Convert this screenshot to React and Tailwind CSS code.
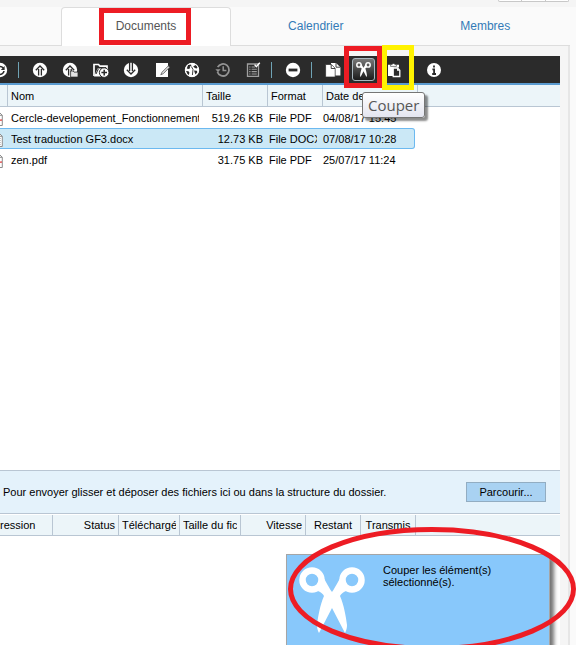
import React from "react";

function Icon({ children, className = "h-4 w-4" }) {
  return (
    <svg viewBox="0 0 16 16" className={className} fill="none" aria-hidden="true">
      {children}
    </svg>
  );
}

const dark = "#2b2b2b";

const RefreshIcon = () => (
  <Icon>
    <circle cx="8" cy="8" r="7.2" fill="#fff" />
    <path d="M11.2 6A4 4 0 1 0 12 9" stroke={dark} strokeWidth="1.6" />
    <path d="M12.6 4v4H8.8z" fill={dark} />
  </Icon>
);

const UpIcon = () => (
  <Icon>
    <circle cx="8" cy="8" r="7.2" fill="#fff" />
    <path d="M3.8 8.2 8 4l4.2 4.2M6.6 7v6.4M9.4 7v6.4" stroke={dark} strokeWidth="1.3" />
  </Icon>
);

const UpFolderIcon = () => (
  <Icon>
    <circle cx="8" cy="8" r="7.2" fill="#fff" />
    <path d="M3.8 8.2 8 4l4.2 4.2M6.6 7v6.4M9.2 7v2.5" stroke={dark} strokeWidth="1.3" />
    <path d="M8.6 9h2.6l.8 1.1H16v5H8.6z" fill="#e4e4e4" stroke={dark} strokeWidth=".8" />
  </Icon>
);

const NewFolderIcon = () => (
  <Icon>
    <path d="M1 14V2.5h4.5L7 4.2h7V7" stroke="#fff" strokeWidth="1.7" />
    <path d="M1 14.4 4.6 6.6H15L13 14.4z" fill="#fff" />
    <path d="m3 12 2.3-5" stroke={dark} strokeWidth="1" />
    <circle cx="11.2" cy="10.6" r="4.8" fill="#fff" stroke={dark} />
    <path d="M11.2 7.8v5.6M8.4 10.6H14" stroke={dark} strokeWidth="1.5" />
  </Icon>
);

const DownIcon = () => (
  <Icon>
    <circle cx="8" cy="8" r="7.2" fill="#fff" />
    <path d="M3.8 7.8 8 12l4.2-4.2M6.6 1v8M9.4 1v8" stroke={dark} strokeWidth="1.3" />
  </Icon>
);

const EditIcon = () => (
  <Icon>
    <path d="M2 1h12v14H2z" fill="#fff" />
    <path d="M14.4 3.8 8 10.2l-1.200 2.600 2.600-1.200L15.400 5.400z" fill="#ddd" stroke="#6a6a6a" strokeWidth=".9" />
  </Icon>
);

const GlobeIcon = () => (
  <Icon>
    <circle cx="8" cy="8" r="7.1" fill="#fff" />
    <path
      d="M4 3 7 2.4l.4 1.400-1.700 1 .5 1.500L4.400 7 2.800 6.600M2 9l2.500.200 1 1.500-1 2.500-1.300-1.700zM9.200 4.300l2.800-1.200 1.600 2.300-1 1.200-1.800-.700zM10 8.400l2.800.300.600 1.500-1.900 2.300-.800-2z"
      fill={dark}
    />
    <path d="M7.400 4.500 9 7.500l-.600 5.500" stroke={dark} strokeWidth=".9" />
    <circle cx="8" cy="8" r="6.7" stroke="#fff" strokeWidth="1" />
  </Icon>
);

const HistoryIcon = () => (
  <Icon>
    <path d="M2.7 5.2A6 6 0 1 1 2.4 10" stroke="#949494" strokeWidth="1.8" />
    <path d="M.4 7.2h5.2L3 10.2z" fill="#949494" />
    <path d="M8.2 4.2v4.2h3.2" stroke="#949494" strokeWidth="1.5" />
  </Icon>
);

const ChecklistIcon = () => (
  <Icon>
    <path d="M2.5 2h11v12.3h-11z" stroke="#a0a0a0" strokeWidth="1.3" />
    <path d="M4.2 5h1.3M4.2 7.3h1.3M4.2 9.6h1.3M4.2 12h1.3M6.6 5H10M6.6 7.3h5.2M6.6 9.6h5.2M6.6 12h5.2" stroke="#a0a0a0" strokeWidth="1.1" />
    <path d="m9.6 2.6 1.7 2L14.8.8" stroke="#fff" strokeWidth="1.4" />
  </Icon>
);

const MinusIcon = () => (
  <Icon>
    <circle cx="8" cy="8" r="7.2" fill="#fff" />
    <path d="M3.6 8h8.8" stroke={dark} strokeWidth="2.8" />
  </Icon>
);

const CopyIcon = () => (
  <Icon>
    <path d="M6 1h5l4.400 4.200V13.500H6z" fill="#fff" />
    <path d="M.6 2.500h5.800l3.800 3.800V15H.6z" fill="#fff" stroke={dark} strokeWidth=".7" />
    <path d="M6.2 2.700v3.800h3.800M11 1.2v4h4.2" stroke={dark} strokeWidth=".9" />
  </Icon>
);

const PasteIcon = () => (
  <Icon>
    <path d="M2 2.800h11V5.500H7.500V14H2z" fill="#fff" />
    <path d="M4.600 4.400V2.400h1.600a1.400 1.400 0 0 1 2.600 0h1.600v2z" fill="#fff" stroke={dark} strokeWidth=".6" />
    <path d="M7.200 6h4.300l2.300 2.300v6.200H7.200z" fill={dark} stroke="#fff" strokeWidth="1.300" />
    <path d="M11 6v2.800h2.800z" fill="#fff" />
  </Icon>
);

const InfoIcon = () => (
  <Icon>
    <circle cx="8" cy="8" r="7" fill="#fff" />
    <path d="M8 3.4v2.2M6.4 7.3h1.7v4.3M6.2 12h3.8" stroke={dark} strokeWidth="1.8" />
  </Icon>
);

function Scissors({ className }) {
  return (
    <svg viewBox="0 0 66 66" className={className} fill="none" aria-hidden="true">
      <circle cx="13" cy="13" r="9.5" stroke="#fff" strokeWidth="6.5" />
      <circle cx="53" cy="13" r="9.5" stroke="#fff" strokeWidth="6.5" />
      <path
        d="M22 9c4 2 6 9 11 16C38 18 40 11 44 9l3 15c-3 1-5 3-6 5 4 9 6 21 7 29 0 3-.5 5-2 8L33 41 20 66c-1.500-3-2-5-2-8 1-8 3-20 7-29-1-2-3-4-6-5z"
        fill="#fff"
      />
    </svg>
  );
}

function Tool({ label, children }) {
  return (
    <button type="button" aria-label={label} className="flex h-6 w-[30px] shrink-0 items-center justify-center">
      {children}
    </button>
  );
}

const Separator = () => <span className="h-4 w-px shrink-0 bg-[#6fa3b5]" />;

function FileIcon({ pdf }) {
  return (
    <svg viewBox="0 0 16 16" className="h-4 w-4 shrink-0" fill="none" aria-hidden="true">
      <path d="M2.500 1h8.500l4.300 4.300V15.500H2.500z" fill="#fff" stroke="#8c8c8c" />
      <path d="M11 1v4.300h4.300" stroke="#8c8c8c" />
      {pdf ? (
        <path d="M4 13c4-2 5-6 5-8 1 4 3 6 6 5-4 0-8 1-11 3" stroke="#e05555" />
      ) : (
        <path d="M4.500 7.500h9M4.500 9.500h9M4.500 11.500h9M4.500 13.500h9" stroke="#8c8c8c" />
      )}
    </svg>
  );
}

const files = [
  { name: "Cercle-developement_Fonctionnement", size: "519.26 KB", format: "File PDF", date: "04/08/17 15:45", pdf: true },
  { name: "Test traduction GF3.docx", size: "12.73 KB", format: "File DOCX", date: "07/08/17 10:28", selected: true },
  { name: "zen.pdf", size: "31.75 KB", format: "File PDF", date: "25/07/17 11:24", pdf: true },
];

function FileTable() {
  const head = "h-[22px] border-b border-r border-[#b9c6d3] bg-[#ecf5f9] p-0 pl-[3px] text-left font-normal";
  return (
    <table className="w-full table-fixed border-separate border-spacing-0 whitespace-nowrap">
      <colgroup>
        <col className="w-2" />
        <col className="w-[195px]" />
        <col className="w-[65px]" />
        <col className="w-[55px]" />
        <col className="w-[95px]" />
        <col />
      </colgroup>
      <thead>
        <tr>
          <th className={head} aria-label="Type" />
          <th className={head}>Nom</th>
          <th className={head}>Taille</th>
          <th className={head}>Format</th>
          <th className={head}><div className="mr-[3px] overflow-hidden">Date de modification</div></th>
          <th className="border-b border-[#b9c6d3] bg-[#ecf5f9] p-0" aria-label="Reste" />
        </tr>
      </thead>
      <tbody>
        {files.map((f) => {
          const cell = f.selected
            ? "h-[21px] border-y border-[#6cb9f0] bg-[#cbe8f6] p-0"
            : "h-[21px] p-0";
          return (
            <tr key={f.name} aria-selected={Boolean(f.selected)}>
              <td className={cell}>
                <div className="flex w-[3px] justify-end overflow-hidden"><FileIcon pdf={f.pdf} /></div>
              </td>
              <td className={cell}><div className="ml-[3px] mr-1 overflow-hidden">{f.name}</div></td>
              <td className={`${cell} text-right`}><div className="pr-[5px]">{f.size}</div></td>
              <td className={cell}><div className="ml-px mr-[6px] overflow-hidden">{f.format}</div></td>
              <td className="p-0">
                <div
                  className={
                    f.selected
                      ? "mr-[3px] flex h-[21px] items-center rounded-r-[3px] border-y border-r border-[#6cb9f0] bg-[#cbe8f6]"
                      : "flex h-[21px] items-center"
                  }
                >
                  {f.date}
                </div>
              </td>
              <td className="p-0" />
            </tr>
          );
        })}
      </tbody>
    </table>
  );
}

function UploadTable() {
  const th = "h-[21px] border-b border-r border-[#b9c6d3] bg-[#ecf5f9] py-0 px-[3px] font-normal";
  return (
    <table className="w-full table-fixed border-separate border-spacing-0 whitespace-nowrap">
      <colgroup>
        <col className="w-[53px]" />
        <col className="w-[66px]" />
        <col className="w-[61px]" />
        <col className="w-[61px]" />
        <col className="w-[65px]" />
        <col className="w-[55px]" />
        <col className="w-[55px]" />
        <col />
      </colgroup>
      <thead>
        <tr>
          <th className="h-[21px] border-b border-r border-[#b9c6d3] bg-[#ecf5f9] p-0 text-left font-normal">ression</th>
          <th className={`${th} text-right`}>Status</th>
          <th className={`${th} text-left`}><div className="overflow-hidden">Téléchargé</div></th>
          <th className={`${th} text-left`}><div className="overflow-hidden">Taille du fichier</div></th>
          <th className={`${th} text-right`}>Vitesse</th>
          <th className={`${th} text-center`}>Restant</th>
          <th className={`${th} text-center`}>Transmis</th>
          <th className="border-b border-[#b9c6d3] bg-[#ecf5f9] p-0" aria-label="Reste" />
        </tr>
      </thead>
    </table>
  );
}

export default function App() {
  return (
    <div className="relative flex h-screen flex-col overflow-hidden bg-[#fafafa] font-['Liberation_Sans',Arial,sans-serif] text-[11px] leading-3 text-black">
      <div className="flex h-[7px] shrink-0 items-start justify-end bg-[#f5f5f5] pr-[7px]">
        <div className="flex h-0.5 w-[71px] divide-x divide-[#c8c8c8] rounded-b border-x border-b border-[#c8c8c8] bg-white">
          <span className="flex-1" />
          <span className="flex-1" />
          <span className="flex-1" />
        </div>
      </div>

      <nav className="mr-[6px] flex h-[39px] shrink-0 border-b border-[#dddddd] text-xs">
        <div className="w-[61px] shrink-0" />
        <a href="#documents" className="relative -mb-px flex w-[170px] shrink-0 items-center justify-center rounded-t border border-b-0 border-[#dddddd] bg-white pb-[2px] text-[#555555]">
          Documents
          <span className="absolute bottom-px left-[37px] top-0 w-[92px] border-[5px] border-[#ed1c24]" />
        </a>
        <a href="#calendrier" className="flex flex-1 items-center justify-center text-[#337ab7]">Calendrier</a>
        <a href="#membres" className="flex flex-1 items-center justify-center text-[#337ab7]">Membres</a>
      </nav>

      <main className="mr-[6px] flex min-h-0 flex-1 flex-col border-r-2 border-[#e6e6e6] bg-[#f5f5f5] pr-2 pt-[10px]">
        <div className="flex h-[29px] shrink-0 items-center border-b-2 border-[#5a9bd0] bg-[#2b2b2b]">
          <div className="flex w-[18px] shrink-0 justify-end overflow-hidden pr-[10px]">
            <button type="button" aria-label="Actualiser"><RefreshIcon /></button>
          </div>
          <Separator />
          <div className="ml-[6px] flex w-[243px] shrink-0 justify-between">
            <Tool label="Envoyer"><UpIcon /></Tool>
            <Tool label="Envoyer un dossier"><UpFolderIcon /></Tool>
            <Tool label="Nouveau dossier"><NewFolderIcon /></Tool>
            <Tool label="Télécharger"><DownIcon /></Tool>
            <Tool label="Modifier"><EditIcon /></Tool>
            <Tool label="Publier"><GlobeIcon /></Tool>
            <Tool label="Historique"><HistoryIcon /></Tool>
            <Tool label="Propriétés"><ChecklistIcon /></Tool>
          </div>
          <div className="ml-[3px] flex"><Separator /></div>
          <div className="ml-[6px] mr-[3px] flex"><Tool label="Supprimer"><MinusIcon /></Tool></div>
          <Separator />
          <div className="ml-[6px] flex"><Tool label="Copier"><CopyIcon /></Tool></div>
          <div className="relative ml-1">
            <button
              type="button"
              aria-label="Couper"
              className="flex h-[23px] w-[23px] items-center justify-center rounded-[3px] border border-[#a9b8c0] bg-gradient-to-b from-[#777777] to-[#1c1c1c]"
            >
              <Scissors className="h-[15px] w-[15px]" />
            </button>
            <span className="pointer-events-none absolute -left-2 -top-3 z-10 h-[42px] w-[38px] border-[5px] border-[#ed1c24]" />
            <span role="tooltip" className="absolute left-[10px] top-[34px] z-20 flex h-[26px] items-center rounded-[3px] border border-[#767676] bg-gradient-to-b from-white to-[#e4e5f0] px-[5px] font-['Open_Sans','Noto_Sans',sans-serif] text-[15px] leading-5 text-[#575757] shadow-[3px_3px_2px_rgba(0,0,0,0.45)]">
              Couper
            </span>
          </div>
          <div className="relative ml-1 flex">
            <Tool label="Coller"><PasteIcon /></Tool>
            <span className="pointer-events-none absolute left-[3px] -top-[13px] z-10 h-[45px] w-8 border-[5px] border-[#fff200]" />
          </div>
          <div className="ml-[10px] flex"><Tool label="Informations"><InfoIcon /></Tool></div>
        </div>

        <section className="min-h-0 flex-1 bg-white">
          <FileTable />
        </section>

        <section className="flex h-[43px] shrink-0 items-center justify-between border-t border-[#b9c6d3] bg-[#e4f2fb] pl-[3px] pr-[14px]">
          <p>Pour envoyer glisser et déposer des fichiers ici ou dans la structure du dossier.</p>
          <button type="button" className="h-5 w-20 border border-[#92adc2] bg-[#a9d2f2]">Parcourir...</button>
        </section>

        <section className="relative h-[132px] shrink-0 border-t border-[#b9c6d3] bg-white pt-px">
          <UploadTable />
          <div role="status" className="absolute right-[10px] top-10 flex h-[110px] w-[264px] items-start border border-[#a5a5a5] bg-[#88c8fb] pl-3 pt-[9px] shadow-[4px_4px_4px_rgba(0,0,0,0.55)]">
            <div className="shrink-0 pt-[3px]">
              <Scissors className="h-[66px] w-[66px]" />
            </div>
            <p className="w-[130px] pl-[18px]">
              Couper les élément(s) sélectionné(s).
            </p>
          </div>
        </section>
      </main>

      <svg viewBox="0 0 288 124" className="pointer-events-none absolute -bottom-[6px] right-0 h-[124px] w-[288px]" fill="none" aria-hidden="true">
        <ellipse cx="144" cy="62" rx="141.500" ry="59.500" stroke="#ed1c24" strokeWidth="5" />
      </svg>
    </div>
  );
}
